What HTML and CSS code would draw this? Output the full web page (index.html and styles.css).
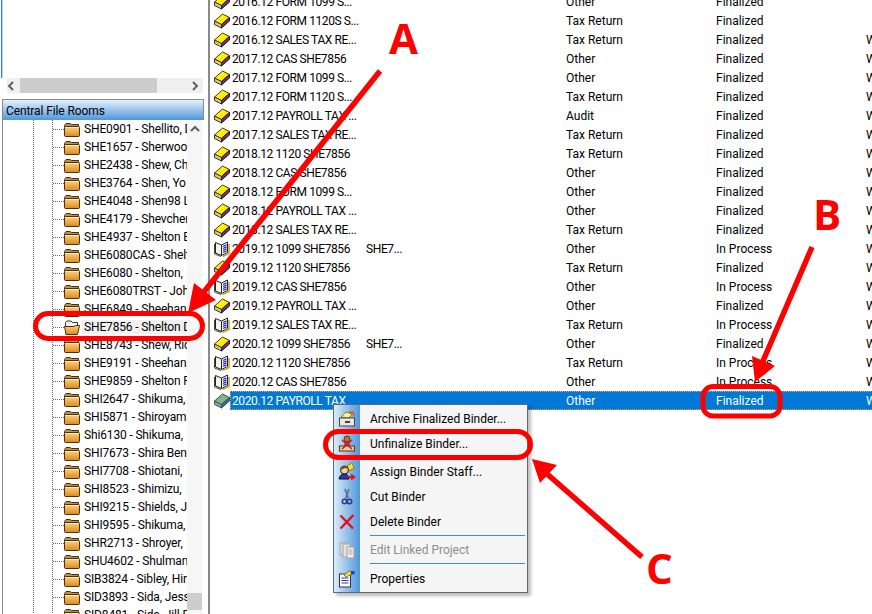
FILE: index.html
```html
<!DOCTYPE html>
<html lang="en">
<head>
<meta charset="utf-8">
<title>Central File Rooms</title>
<link rel="stylesheet" href="styles.css">
</head>
<body>
<svg class="defs" width="0" height="0" aria-hidden="true">
  <defs>
    <linearGradient id="fold" x1="0" y1="0" x2="0" y2="1"><stop offset="0" stop-color="#ffd27a"/><stop offset="1" stop-color="#d98a20"/></linearGradient>
    <linearGradient id="yel" x1="0" y1="0" x2="1" y2="1"><stop offset="0" stop-color="#fffbb0"/><stop offset=".45" stop-color="#fff000"/><stop offset="1" stop-color="#f5d800"/></linearGradient>
    <symbol id="folder" viewBox="0 0 16 16">
      <path d="M0.5 4.5 L2 2.5 H6 L7.5 3.5 H14.5 V6 H0.5 Z" fill="#b8935a" stroke="#4a3010" stroke-width="1"/>
      <rect x="0.5" y="5.5" width="15" height="10" rx="1" fill="url(#fold)" stroke="#4a3010" stroke-width="1"/>
      <path d="M1.5 6.5 H14.5" stroke="#ffedbf" stroke-width="1"/>
    </symbol>
    <symbol id="folderopen" viewBox="0 0 16 16">
      <path d="M1.5 3.5 L3 2 H7 L8.5 3.5 H13.5 V8 H1.5 Z" fill="#f2f2ee" stroke="#4a3010" stroke-width="1"/>
      <path d="M0.5 7.5 H10 L11.5 6.5 H15.5 L13.5 15.5 H2 Z" fill="url(#fold)" stroke="#4a3010" stroke-width="1"/>
    </symbol>
    <symbol id="book" viewBox="0 0 16 16">
      <path d="M0.5 8 L8.5 1 L15.5 4.5 L7.5 11.5 Z" fill="url(#yel)" stroke="#3a3a10" stroke-width="1"/>
      <path d="M0.5 8 V11.5 L7.5 15 V11.5 Z" fill="#d8c890" stroke="#3a3a10" stroke-width="1"/>
      <path d="M7.5 11.5 V15 L15.5 8 V4.5 Z" fill="#2a35b8" stroke="#222" stroke-width="1"/>
      <path d="M8.5 12.3 L15 6.6" stroke="#e02020" stroke-width="1"/>
    </symbol>
    <symbol id="bookgreen" viewBox="0 0 16 16">
      <path d="M0.5 8 L8.5 1 L15.5 4.5 L7.5 11.5 Z" fill="#7fb58e" stroke="#3a5a48" stroke-width="1"/>
      <path d="M0.5 8 V11.5 L7.5 15 V11.5 Z" fill="#8fa59a" stroke="#3a5a48" stroke-width="1"/>
      <path d="M7.5 11.5 V15 L15.5 8 V4.5 Z" fill="#3a6f8f" stroke="#2f4f60" stroke-width="1"/>
    </symbol>
    <symbol id="bookopen" viewBox="0 0 16 16">
      <path d="M1.5 1.5 L7.5 4 V14.5 L1.5 12 Z" fill="#f7f4e6" stroke="#222" stroke-width="1"/>
      <path d="M7.5 4 L13.5 1 V11.5 L7.5 14.5 Z" fill="#fff" stroke="#222" stroke-width="1"/>
      <path d="M9 5.5 L12.5 3.8 M9 7.5 L12.5 5.8 M9 9.5 L12.5 7.8 M9 11.5 L12.5 9.8" stroke="#1f2fd0" stroke-width="1.3"/>
      <path d="M15 3 V12.5 L8.5 15.5" fill="none" stroke="#c9a020" stroke-width="1.5"/>
      <path d="M0.5 3 V13 L7 15.5" fill="none" stroke="#444" stroke-width="1"/>
    </symbol>
  </defs>
</svg>

<div class="app">
  <aside class="left">
    <div class="topblank"></div>
    <div class="hscroll">
      <svg class="arrow al" viewBox="0 0 10 10" width="10" height="10"><path d="M7 1 L3 5 L7 9" fill="none" stroke="#606060" stroke-width="2"/></svg>
      <div class="htrack"><div class="hthumb"></div></div>
      <svg class="arrow ar" viewBox="0 0 10 10" width="10" height="10"><path d="M3 1 L7 5 L3 9" fill="none" stroke="#606060" stroke-width="2"/></svg>
    </div>
    <div class="panel">
      <div class="panelhead">Central File Rooms</div>
      <div class="treewrap">
        <div class="tree">
          <div class="t"><svg class="fi"><use href="#folder"/></svg><span>SHE0901 - Shellito, D</span></div>
          <div class="t"><svg class="fi"><use href="#folder"/></svg><span>SHE1657 - Sherwood</span></div>
          <div class="t"><svg class="fi"><use href="#folder"/></svg><span>SHE2438 - Shew, Ch</span></div>
          <div class="t"><svg class="fi"><use href="#folder"/></svg><span>SHE3764 - Shen, Yo</span></div>
          <div class="t"><svg class="fi"><use href="#folder"/></svg><span>SHE4048 - Shen98 L</span></div>
          <div class="t"><svg class="fi"><use href="#folder"/></svg><span>SHE4179 - Shevchen</span></div>
          <div class="t"><svg class="fi"><use href="#folder"/></svg><span>SHE4937 - Shelton E</span></div>
          <div class="t"><svg class="fi"><use href="#folder"/></svg><span>SHE6080CAS - Shelt</span></div>
          <div class="t"><svg class="fi"><use href="#folder"/></svg><span>SHE6080 - Shelton, </span></div>
          <div class="t"><svg class="fi"><use href="#folder"/></svg><span>SHE6080TRST - Joh</span></div>
          <div class="t"><svg class="fi"><use href="#folder"/></svg><span>SHE6849 - Sheehan</span></div>
          <div class="t sel"><svg class="fi"><use href="#folderopen"/></svg><span>SHE7856 - Shelton D</span></div>
          <div class="t"><svg class="fi"><use href="#folder"/></svg><span>SHE8743 - Shew, Ric</span></div>
          <div class="t"><svg class="fi"><use href="#folder"/></svg><span>SHE9191 - Sheehan,</span></div>
          <div class="t"><svg class="fi"><use href="#folder"/></svg><span>SHE9859 - Shelton F</span></div>
          <div class="t"><svg class="fi"><use href="#folder"/></svg><span>SHI2647 - Shikuma, </span></div>
          <div class="t"><svg class="fi"><use href="#folder"/></svg><span>SHI5871 - Shiroyam</span></div>
          <div class="t"><svg class="fi"><use href="#folder"/></svg><span>Shi6130 - Shikuma, </span></div>
          <div class="t"><svg class="fi"><use href="#folder"/></svg><span>SHI7673 - Shira Ben</span></div>
          <div class="t"><svg class="fi"><use href="#folder"/></svg><span>SHI7708 - Shiotani, </span></div>
          <div class="t"><svg class="fi"><use href="#folder"/></svg><span>SHI8523 - Shimizu, </span></div>
          <div class="t"><svg class="fi"><use href="#folder"/></svg><span>SHI9215 - Shields, J</span></div>
          <div class="t"><svg class="fi"><use href="#folder"/></svg><span>SHI9595 - Shikuma, </span></div>
          <div class="t"><svg class="fi"><use href="#folder"/></svg><span>SHR2713 - Shroyer, </span></div>
          <div class="t"><svg class="fi"><use href="#folder"/></svg><span>SHU4602 - Shulman</span></div>
          <div class="t"><svg class="fi"><use href="#folder"/></svg><span>SIB3824 - Sibley, Hir</span></div>
          <div class="t"><svg class="fi"><use href="#folder"/></svg><span>SID3893 - Sida, Jesse</span></div>
          <div class="t"><svg class="fi"><use href="#folder"/></svg><span>SID8481 - Sida, Jill P</span></div>
        </div>
        <div class="vscroll">
          <svg class="arrow" viewBox="0 0 10 10" width="10" height="10"><path d="M1 7 L5 3 L9 7" fill="none" stroke="#606060" stroke-width="2"/></svg>
          <div class="vthumb"></div>
        </div>
      </div>
    </div>
  </aside>
  <div class="splitter"></div>
  <main class="list">
    <div class="r"><svg class="bi"><use href="#book"/></svg><span class="n">2016.12 FORM 1099 S...</span><span class="e"></span><span class="ty">Other</span><span class="st">Finalized</span><span class="w"></span></div>
    <div class="r"><svg class="bi"><use href="#book"/></svg><span class="n">2016.12 FORM 1120S S...</span><span class="e"></span><span class="ty">Tax Return</span><span class="st">Finalized</span><span class="w"></span></div>
    <div class="r"><svg class="bi"><use href="#book"/></svg><span class="n">2016.12 SALES TAX RE...</span><span class="e"></span><span class="ty">Tax Return</span><span class="st">Finalized</span><span class="w">W</span></div>
    <div class="r"><svg class="bi"><use href="#book"/></svg><span class="n">2017.12 CAS SHE7856</span><span class="e"></span><span class="ty">Other</span><span class="st">Finalized</span><span class="w">W</span></div>
    <div class="r"><svg class="bi"><use href="#book"/></svg><span class="n">2017.12 FORM 1099 S...</span><span class="e"></span><span class="ty">Other</span><span class="st">Finalized</span><span class="w">W</span></div>
    <div class="r"><svg class="bi"><use href="#book"/></svg><span class="n">2017.12 FORM 1120 S...</span><span class="e"></span><span class="ty">Tax Return</span><span class="st">Finalized</span><span class="w">W</span></div>
    <div class="r"><svg class="bi"><use href="#book"/></svg><span class="n">2017.12 PAYROLL TAX ...</span><span class="e"></span><span class="ty">Audit</span><span class="st">Finalized</span><span class="w">W</span></div>
    <div class="r"><svg class="bi"><use href="#book"/></svg><span class="n">2017.12 SALES TAX RE...</span><span class="e"></span><span class="ty">Tax Return</span><span class="st">Finalized</span><span class="w">W</span></div>
    <div class="r"><svg class="bi"><use href="#book"/></svg><span class="n">2018.12 1120 SHE7856</span><span class="e"></span><span class="ty">Tax Return</span><span class="st">Finalized</span><span class="w">W</span></div>
    <div class="r"><svg class="bi"><use href="#book"/></svg><span class="n">2018.12 CAS SHE7856</span><span class="e"></span><span class="ty">Other</span><span class="st">Finalized</span><span class="w">W</span></div>
    <div class="r"><svg class="bi"><use href="#book"/></svg><span class="n">2018.12 FORM 1099 S...</span><span class="e"></span><span class="ty">Other</span><span class="st">Finalized</span><span class="w">W</span></div>
    <div class="r"><svg class="bi"><use href="#book"/></svg><span class="n">2018.12 PAYROLL TAX ...</span><span class="e"></span><span class="ty">Other</span><span class="st">Finalized</span><span class="w">W</span></div>
    <div class="r"><svg class="bi"><use href="#book"/></svg><span class="n">2018.12 SALES TAX RE...</span><span class="e"></span><span class="ty">Tax Return</span><span class="st">Finalized</span><span class="w">W</span></div>
    <div class="r"><svg class="bi"><use href="#bookopen"/></svg><span class="n">2019.12 1099 SHE7856</span><span class="e">SHE7...</span><span class="ty">Other</span><span class="st">In Process</span><span class="w">W</span></div>
    <div class="r"><svg class="bi"><use href="#book"/></svg><span class="n">2019.12 1120 SHE7856</span><span class="e"></span><span class="ty">Tax Return</span><span class="st">Finalized</span><span class="w">W</span></div>
    <div class="r"><svg class="bi"><use href="#bookopen"/></svg><span class="n">2019.12 CAS SHE7856</span><span class="e"></span><span class="ty">Other</span><span class="st">In Process</span><span class="w">W</span></div>
    <div class="r"><svg class="bi"><use href="#book"/></svg><span class="n">2019.12 PAYROLL TAX ...</span><span class="e"></span><span class="ty">Other</span><span class="st">Finalized</span><span class="w">W</span></div>
    <div class="r"><svg class="bi"><use href="#bookopen"/></svg><span class="n">2019.12 SALES TAX RE...</span><span class="e"></span><span class="ty">Tax Return</span><span class="st">In Process</span><span class="w">W</span></div>
    <div class="r"><svg class="bi"><use href="#book"/></svg><span class="n">2020.12 1099 SHE7856</span><span class="e">SHE7...</span><span class="ty">Other</span><span class="st">Finalized</span><span class="w">W</span></div>
    <div class="r"><svg class="bi"><use href="#bookopen"/></svg><span class="n">2020.12 1120 SHE7856</span><span class="e"></span><span class="ty">Tax Return</span><span class="st">In Process</span><span class="w">W</span></div>
    <div class="r"><svg class="bi"><use href="#bookopen"/></svg><span class="n">2020.12 CAS SHE7856</span><span class="e"></span><span class="ty">Other</span><span class="st">In Process</span><span class="w">W</span></div>
    <div class="r active"><svg class="bi"><use href="#bookgreen"/></svg><span class="band"><span class="n">2020.12 PAYROLL TAX</span><span class="e"></span><span class="ty">Other</span><span class="st">Finalized</span><span class="w">W</span></span></div>
  </main>
</div>

<div class="menu">
  <div class="mi"><svg class="mic" viewBox="0 0 18 18"><path d="M3 7 L8 2 L14 4 L11 8 Z" fill="#fff08a" stroke="#8a7a20"/><path d="M11 2 L15 2 L16 6" fill="none" stroke="#e05030" stroke-width="1.5"/><rect x="1.5" y="8" width="15" height="8" fill="#e8e8e0" stroke="#444"/><rect x="7" y="11" width="5" height="2" fill="#444"/></svg><span>Archive Finalized Binder...</span></div>
  <div class="mi"><svg class="mic" viewBox="0 0 18 18"><circle cx="9" cy="4" r="3" fill="#b5763a" stroke="#5a3510"/><path d="M7 7 H11 V11 H7 Z" fill="#b5763a" stroke="#5a3510"/><rect x="1.5" y="11" width="15" height="5" fill="#e8c9a0" stroke="#5a3510"/><path d="M4 5 L14 14 M14 5 L4 14" stroke="#e5102a" stroke-width="1.6"/></svg><span>Unfinalize Binder...</span></div>
  <div class="mi gapb"><svg class="mic" viewBox="0 0 18 18"><path d="M9 3 L14 0 L16 5 L11 8 Z" fill="#ffe820" stroke="#8a7a20"/><circle cx="6.5" cy="7" r="4" fill="#f6cfa0" stroke="#222"/><path d="M2.5 7 Q3 2 7 3 Q10 3 10.5 6 L7 5 Z" fill="#7a4a18"/><path d="M1 16 Q2 11 6.5 11 Q10 11 11 16 Z" fill="#2538b8" stroke="#111"/><path d="M10 14 H15 M13 11.5 L16.5 14 L13 16.5" fill="none" stroke="#e5102a" stroke-width="1.8"/></svg><span>Assign Binder Staff...</span></div>
  <div class="mi"><svg class="mic" viewBox="0 0 18 18"><path d="M7 1 L10.5 10.5 M11 1 L7.5 10.5" stroke="#5f6f88" stroke-width="1.6"/><circle cx="6.5" cy="13.5" r="2.2" fill="none" stroke="#2a3a90" stroke-width="1.6"/><circle cx="11.5" cy="13.5" r="2.2" fill="none" stroke="#2a3a90" stroke-width="1.6"/></svg><span>Cut Binder</span></div>
  <div class="mi"><svg class="mic" viewBox="0 0 18 18"><path d="M2.5 2.5 L15 15.5 M15.5 2 L2.5 15.5" stroke="#e01020" stroke-width="2.4"/></svg><span>Delete Binder</span></div>
  <div class="sep"></div>
  <div class="mi off"><svg class="mic" viewBox="0 0 18 18"><rect x="2" y="2" width="7" height="12" fill="#d8d8d8" stroke="#a8a8a8"/><rect x="5" y="3" width="7" height="13" fill="#e2e2e2" stroke="#a8a8a8"/><rect x="9" y="6" width="7" height="11" fill="#f0f0f0" stroke="#a0a0a0"/><path d="M10.5 9 H14.5 M10.5 11 H14.5 M10.5 13 H14.5" stroke="#a8a8a8"/></svg><span>Edit Linked Project</span></div>
  <div class="sep"></div>
  <div class="mi"><svg class="mic" viewBox="0 0 18 18"><rect x="1.5" y="4" width="11" height="13" fill="#fff" stroke="#333"/><path d="M3.5 8 H10.5 M3.5 10.5 H10.5 M3.5 13 H10.5" stroke="#2538b8"/><path d="M6 5 L12 0.5 L14 4 L8 7 Z" fill="#ffd84a" stroke="#8a7a20"/><rect x="13" y="1" width="3.5" height="3.5" fill="#1446c8"/></svg><span>Properties</span></div>
</div>

<svg class="marks" viewBox="0 0 872 614" aria-hidden="true">
  <rect x="35.5" y="313.5" width="167" height="25" rx="12.5" class="ring"/>
  <rect x="703" y="386.5" width="77" height="29.5" rx="10" class="ring"/>
  <rect x="325.5" y="431.5" width="205" height="26" rx="13" class="ring"/>
  <path d="M380 71 L199 298" class="line"/>
  <path d="M188 313 L194 283 L216 300 Z" class="head"/>
  <path d="M812 247 L760 368" class="line"/>
  <path d="M755 382 L752 356 L775 366 Z" class="head"/>
  <path d="M642 557 L546 473" class="line"/>
  <path d="M532 459 L557 465 L540 483 Z" class="head"/>
</svg>
<span class="letter la">A</span>
<span class="letter lb">B</span>
<span class="letter lc">C</span>
</body>
</html>
```
FILE: styles.css
```css
* { box-sizing: border-box; }
html, body { margin: 0; padding: 0; background: #fff; }
body {
  width: 872px; height: 614px; overflow: hidden; position: relative;
  font-family: Roboto, "Open Sans", sans-serif; font-size: 12px; color: #000;
}
.defs { position: absolute; }
.app { display: flex; height: 614px; }

.left { width: 208px; height: 614px; flex: none; display: flex; flex-direction: column; }
.topblank { height: 78px; margin-left: 1px; border-left: 1px solid #2f82d4; box-shadow: inset 1px 0 #b8d4ee; }
.hscroll { height: 15px; margin-left: 7px; width: 196px; display: flex; align-items: center; background: #f0f0f0; }
.hscroll .arrow { flex: none; }
.arrow.al { margin: 0 4px 0 -1px; }
.arrow.ar { margin: 0 3px 0 0; }
.htrack { flex: 1; height: 15px; }
.hthumb { width: 137px; height: 15px; background: #cdcdcd; }
.panel { margin: 6px 4px 0 2px; flex: 1; min-height: 0; display: flex; flex-direction: column; border-left: 1px solid #8a8a8a; }
.panelhead {
  height: 21px; line-height: 20px; padding: 1px 0 0 3px; letter-spacing: -0.1px;
  background: linear-gradient(#e6f1fb, #a9cdf0 40%, #4f97dc);
  border-top: 1px solid #8a8a8a; border-right: 1px solid #8a8a8a; white-space: nowrap;
}
.treewrap { flex: 1; min-height: 0; display: flex; overflow: hidden; }
.tree {
  width: 184px; flex: none; overflow: hidden;
  background-image: linear-gradient(#666 50%, transparent 50%), linear-gradient(#666 50%, transparent 50%);
  background-size: 1px 2px, 1px 2px; background-repeat: repeat-y; background-position: 30px 0, 49px 0;
}
.t { height: 18px; display: flex; align-items: center; padding-left: 61px; white-space: nowrap; overflow: hidden;
  background: repeating-linear-gradient(90deg, #666 0 1px, transparent 1px 2px) 50px 50% / 11px 1px no-repeat; }
.t span { margin-left: 2px; padding-left: 2px; flex: 1; letter-spacing: -0.15px; }
.t.sel span { background: #f1f1f1; }
.fi { width: 16px; height: 16px; flex: none; }
.vscroll { width: 15px; margin-right: 2px; flex: none; display: flex; flex-direction: column; align-items: center; background: #f6f6f6; padding: 4px 0 4px; }
.vscroll .arrow { flex: none; }
.vthumb { width: 15px; height: 17px; margin-top: auto; background: #cdcdcd; }

.splitter { width: 2px; flex: none; background: #8a8a8a; }

.list { flex: 1; min-width: 0; overflow: hidden; margin-top: -8px; }
.r { height: 19px; display: flex; align-items: center; white-space: nowrap; padding-left: 4px; }
.bi { width: 16px; height: 16px; flex: none; }
.n { width: 136px; flex: none; padding-left: 2px; letter-spacing: -0.4px; }
.e { width: 200px; flex: none; letter-spacing: -0.4px; }
.ty { width: 150px; flex: none; }
.st { width: 150px; flex: none; }
.w { flex: none; }
.band { display: flex; flex: 1; align-items: center; height: 19px; background: #0078d7; color: #fff; outline: 1px dotted #f2a14a; outline-offset: -1px; }

.menu {
  position: absolute; left: 333px; top: 404px; width: 195px; height: 189px;
  padding-top: 1px; background: linear-gradient(90deg, #dcebf9 0, #4f97dc 26px, #f5f5f5 26px);
  border: 1px solid #5a6a78; box-shadow: 3px 3px 3px rgba(0,0,0,.25);
}
.mi { height: 25px; display: flex; align-items: center; white-space: nowrap; }
.mic { width: 18px; height: 18px; flex: none; margin-left: 4px; }
.mi span { margin-left: 14px; }
.mi.off { height: 24px; }
.mi.off span { color: #8d8d8d; }
.gapb { margin-top: 3px; }
.sep { height: 1px; background: #3f8fd0; margin: 1px 2px 0 36px; }
.mi + .sep + .mi { margin-top: 2px; }

.marks { position: absolute; left: 0; top: 0; width: 872px; height: 614px; pointer-events: none; }
.ring { fill: none; stroke: #f00; stroke-width: 5; }
.line { fill: none; stroke: #f00; stroke-width: 5.5; }
.head { fill: #f00; }
.letter { position: absolute; color: #f00; font-weight: 700; font-size: 42px; line-height: 42px; font-family: "Open Sans", sans-serif; }
.la { left: 389px; top: 17px; }
.lb { left: 813px; top: 193px; }
.lc { left: 646px; top: 547px; }
```
